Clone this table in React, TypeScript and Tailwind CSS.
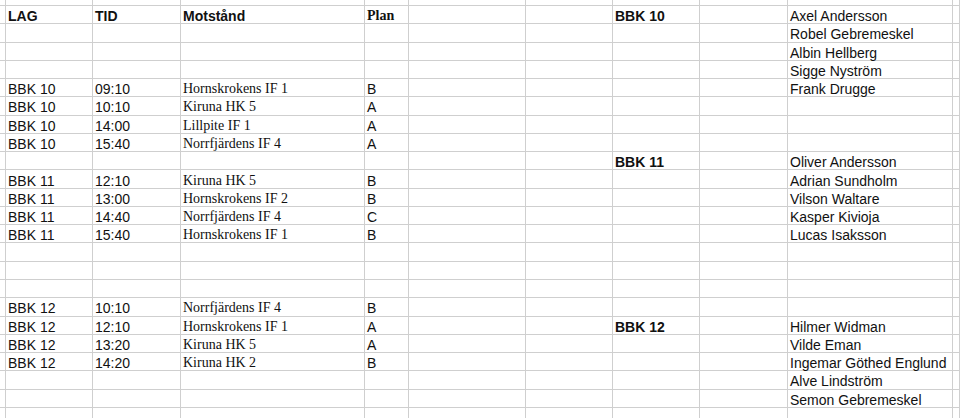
import React from 'react';

type Kind = 'sans' | 'serif' | 'bold' | 'boldSerif';
type Cell = { text: string; kind: Kind } | null;

const s = (text: string): Cell => ({ text, kind: 'sans' });
const t = (text: string): Cell => ({ text, kind: 'serif' });
const b = (text: string): Cell => ({ text, kind: 'bold' });

// columns: lag, tid, motstånd, plan, (tom), (tom), lag, (tom), spelare
const rows: Cell[][] = [
  [b('LAG'), b('TID'), b('Motstånd'), { text: 'Plan', kind: 'boldSerif' }, null, null, b('BBK 10'), null, s('Axel Andersson')],
  [null, null, null, null, null, null, null, null, s('Robel Gebremeskel')],
  [null, null, null, null, null, null, null, null, s('Albin Hellberg')],
  [null, null, null, null, null, null, null, null, s('Sigge Nyström')],
  [s('BBK 10'), s('09:10'), t('Hornskrokens IF 1'), s('B'), null, null, null, null, s('Frank Drugge')],
  [s('BBK 10'), s('10:10'), t('Kiruna HK 5'), s('A'), null, null, null, null, null],
  [s('BBK 10'), s('14:00'), t('Lillpite IF 1'), s('A'), null, null, null, null, null],
  [s('BBK 10'), s('15:40'), t('Norrfjärdens IF 4'), s('A'), null, null, null, null, null],
  [null, null, null, null, null, null, b('BBK 11'), null, s('Oliver Andersson')],
  [s('BBK 11'), s('12:10'), t('Kiruna HK 5'), s('B'), null, null, null, null, s('Adrian Sundholm')],
  [s('BBK 11'), s('13:00'), t('Hornskrokens IF 2'), s('B'), null, null, null, null, s('Vilson Waltare')],
  [s('BBK 11'), s('14:40'), t('Norrfjärdens IF 4'), s('C'), null, null, null, null, s('Kasper Kivioja')],
  [s('BBK 11'), s('15:40'), t('Hornskrokens IF 1'), s('B'), null, null, null, null, s('Lucas Isaksson')],
  [null, null, null, null, null, null, null, null, null],
  [null, null, null, null, null, null, null, null, null],
  [null, null, null, null, null, null, null, null, null],
  [s('BBK 12'), s('10:10'), t('Norrfjärdens IF 4'), s('B'), null, null, null, null, null],
  [s('BBK 12'), s('12:10'), t('Hornskrokens IF 1'), s('A'), null, null, b('BBK 12'), null, s('Hilmer Widman')],
  [s('BBK 12'), s('13:20'), t('Kiruna HK 5'), s('A'), null, null, null, null, s('Vilde Eman')],
  [s('BBK 12'), s('14:20'), t('Kiruna HK 2'), s('B'), null, null, null, null, s('Ingemar Göthed Englund')],
  [null, null, null, null, null, null, null, null, s('Alve Lindström')],
  [null, null, null, null, null, null, null, null, s('Semon Gebremeskel')],
];

const kindClass: Record<Kind, string> = {
  sans: "font-['Liberation_Sans',Arial,sans-serif]",
  serif: "font-['Liberation_Serif','Times_New_Roman',serif]",
  bold: "font-['Liberation_Sans',Arial,sans-serif] font-bold",
  boldSerif: "font-['Liberation_Serif','Times_New_Roman',serif] font-bold",
};

const cellBase = 'border-r border-b border-[#cfcfcf] flex items-center pl-[2px] pt-[3px] whitespace-nowrap overflow-visible';

function Row({ cells }: { cells: Cell[] }) {
  return (
    <>
      <div className={cellBase} />
      {cells.map((c, i) => (
        <div key={i} className={cellBase}>
          {c && <span className={`text-[14px] leading-4 text-[#111] ${kindClass[c.kind]}`}>{c.text}</span>}
        </div>
      ))}
      <div className={cellBase} />
    </>
  );
}

export default function App() {
  const blank: Cell[] = Array(9).fill(null);
  return (
    <div className="w-[960px] h-[418px] overflow-hidden bg-white">
      <div className="grid grid-cols-[6px_87px_88px_184px_44px_117px_87px_87px_88px_165px_7px] grid-rows-[6px_repeat(22,18.27px)_12px]">
        <Row cells={blank} />
        {rows.map((r, i) => (
          <Row key={i} cells={r} />
        ))}
        <Row cells={blank} />
      </div>
    </div>
  );
}
